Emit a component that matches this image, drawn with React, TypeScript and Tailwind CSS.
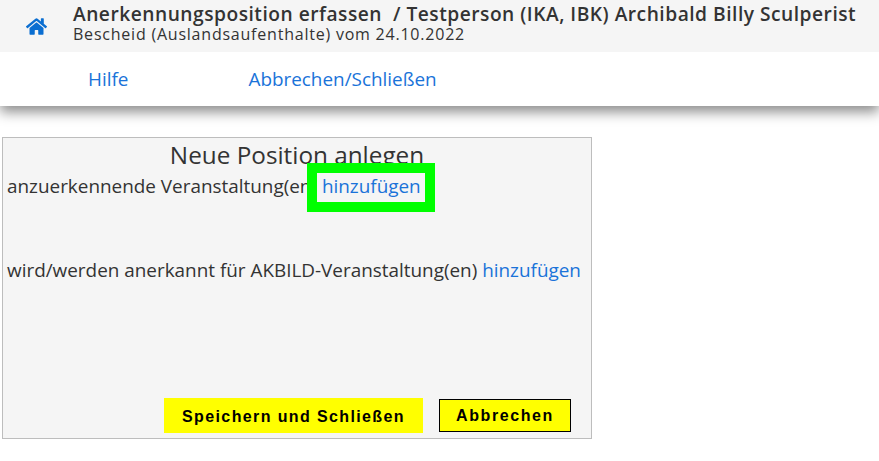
import { FaHome } from "react-icons/fa";

export default function App() {
  return (
    <div className="min-h-[461px] bg-white font-['Open_Sans',sans-serif] text-[#333]">
      <header className="shadow-[0_6px_12px_rgba(0,0,0,0.45)]">
        <div className="flex h-[52px] items-start bg-[#f5f5f5]">
          <div className="flex w-[73px] shrink-0 pt-[16px] pl-[26px]">
            <FaHome className="text-[21px] text-[#0a6ed1]" />
          </div>
          <div className="pt-[3px]">
            <div className="text-[19.2px] leading-[21px] font-semibold tracking-[0.5px] whitespace-pre">Anerkennungsposition erfassen  / Testperson (IKA, IBK) Archibald Billy Sculperist</div>
            <div className="text-[16px] leading-[20px] tracking-[0.78px]">Bescheid (Auslandsaufenthalte) vom 24.10.2022</div>
          </div>
        </div>
        <nav className="flex h-[54px] items-center bg-white text-[18.9px] text-[#1a73d9]">
          <a className="ml-[88px]">Hilfe</a>
          <a className="ml-[120px]">Abbrechen/Schließen</a>
        </nav>
      </header>
      <main className="pt-[31px] pl-[2px]">
        <section className="relative flex h-[302px] w-[590px] flex-col border border-[#bdbdbd] bg-[#f5f5f5] pl-[4px]">
          <h2 className="pr-[4px] text-center text-[24.3px] leading-[33px]">Neue Position anlegen</h2>
          <p className="mt-[2px] text-[18.9px] leading-[26px]">
            anzuerkennende Veranstaltung(en) <a className="text-[#1a73d9]">hinzufügen</a>
          </p>
          <p className="mt-[58px] text-[18.9px] leading-[26px]">
            wird/werden anerkannt für AKBILD-Veranstaltung(en) <a className="text-[#1a73d9]">hinzufügen</a>
          </p>
          <div className="mt-auto mb-[5px] flex items-center justify-end gap-[16px] pr-[20px] font-['Liberation_Sans',sans-serif] text-[16px] font-bold tracking-[1.6px] text-black">
            <button className="h-[35px] w-[259px] bg-[#ffff00] pt-[2px] tracking-[1.38px]">Speichern und Schließen</button>
            <button className="h-[33px] w-[132px] border border-black bg-[#ffff00]">Abbrechen</button>
          </div>
          <div className="absolute top-[25px] left-[304px] h-[49px] w-[128px] border-[10px] border-[#00ff00]" />
        </section>
      </main>
    </div>
  );
}
